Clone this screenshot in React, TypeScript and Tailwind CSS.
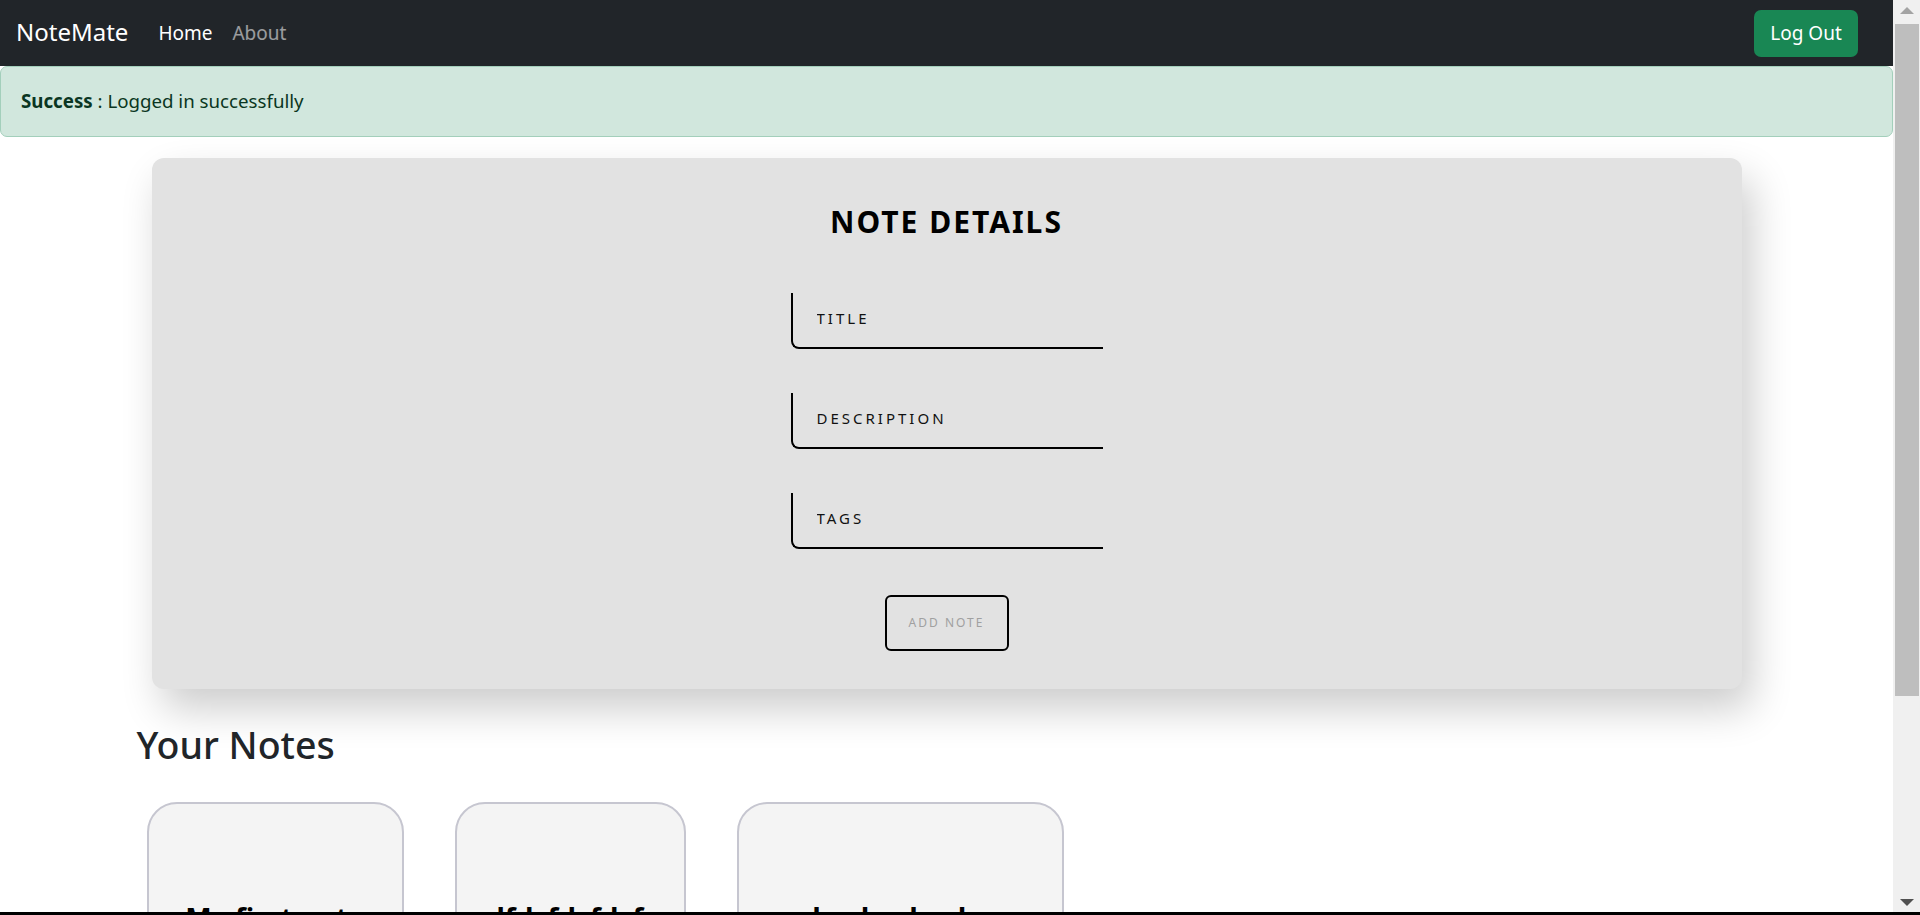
import React from "react";

const notes = [
  { title: "My first note", description: "This is the description of my very first note", tag: "personal", w: "w-[257px]" },
  { title: "lfdsfdsfdsf", description: "fdsfdsfdsfdsfds", tag: "general", w: "w-[231px]" },
  { title: "dsadsadsadsa", description: "dsadsadsadsadsadsadsa", tag: "work", w: "w-[327px]" },
];

function NoteInput({ placeholder }: { placeholder: string }) {
  return (
    <input
      type="text"
      placeholder={placeholder}
      className="w-[312px] h-[56px] bg-transparent border-l-2 border-b-2 border-black rounded-bl-[8px] pl-[24px] pb-[5px] text-[15px] tracking-[3px] text-black placeholder:text-[#111] outline-none"
    />
  );
}

function FakeScrollbar() {
  return (
    <div aria-hidden className="fixed top-0 right-0 w-[27px] h-[915px] bg-[#f0f0f0] flex flex-col">
      <div className="h-[24px] flex items-center justify-center">
        <svg width="27" height="24" viewBox="0 0 27 24">
          <path d="M7 14L14 7L21 14Z" fill="#a3a3a3" />
        </svg>
      </div>
      <div className="h-[672px] ml-[2px] mr-[1px] bg-[#bebebe]" />
      <div className="flex-1" />
      <div className="h-[24px] flex items-center justify-center">
        <svg width="27" height="24" viewBox="0 0 27 24">
          <path d="M7 8L14 15L21 8Z" fill="#505050" />
        </svg>
      </div>
    </div>
  );
}

export default function App() {
  return (
    <div className="mr-[27px] bg-white font-['Noto_Sans',sans-serif]">
      <nav className="h-[66px] bg-[#212529] flex items-center pl-[15px] pr-[15px]">
        <a className="ml-px text-[24px] text-white leading-none -mt-[2px]">NoteMate</a>
        <a className="ml-[30px] text-[19px] text-white leading-none">Home</a>
        <a className="ml-[20px] text-[19px] text-white/55 leading-none">About</a>
        <button className="ml-auto mr-[20px] w-[104px] h-[47px] rounded-[7px] bg-[#198754] text-white text-[19px] leading-none">
          Log Out
        </button>
      </nav>

      <div className="h-[71px] mb-[21px] flex items-center px-[20px] bg-[#d1e7dd] border border-[#a3cfbb] rounded-[7px] text-[#0a3622] text-[18.7px]">
        <span>
          <strong className="font-bold">Success</strong> : Logged in successfully
        </span>
      </div>

      <div className="max-w-[1650px] mx-auto px-[15px] pb-[47px]">
        <div className="mx-[15px] rounded-[12px] bg-[#e2e2e2] shadow-[10px_20px_40px_rgba(0,0,0,0.2)] flex flex-col items-center pt-[46px] pb-[38px]">
          <h2 className="text-[30px] leading-[36px] font-bold tracking-[2px] text-black">NOTE DETAILS</h2>
          <div className="mt-[53px] flex flex-col gap-[44px]">
            <NoteInput placeholder="TITLE" />
            <NoteInput placeholder="DESCRIPTION" />
            <NoteInput placeholder="TAGS" />
          </div>
          <button className="mt-[46px] w-[124px] h-[56px] border-2 border-black rounded-[6px] text-[12px] tracking-[2px] text-[#a0a0a0]">
            ADD NOTE
          </button>
        </div>

        <h2 className="mt-[33px] text-[37.5px] leading-[46px] font-medium text-[#212529]">Your Notes</h2>

        <div className="mt-[34px] pl-[10px] flex gap-[51px]">
          {notes.map((n) => (
            <div
              key={n.title}
              className={`${n.w} h-[330px] rounded-[30px] border-2 border-[#c6c6d0] bg-[#f4f4f4] flex flex-col items-center pt-[97px] px-[16px]`}
            >
              <h3 className="text-[28px] leading-[34px] font-bold text-black text-center">{n.title}</h3>
              <p className="mt-[12px] text-[16px] text-[#333] text-center break-all">{n.description}</p>
              <span className="mt-[10px] text-[14px] text-[#666]">#{n.tag}</span>
            </div>
          ))}
        </div>
      </div>

      <FakeScrollbar />
      <div className="fixed left-0 right-0 bottom-0 h-[3px] bg-black" />
    </div>
  );
}
